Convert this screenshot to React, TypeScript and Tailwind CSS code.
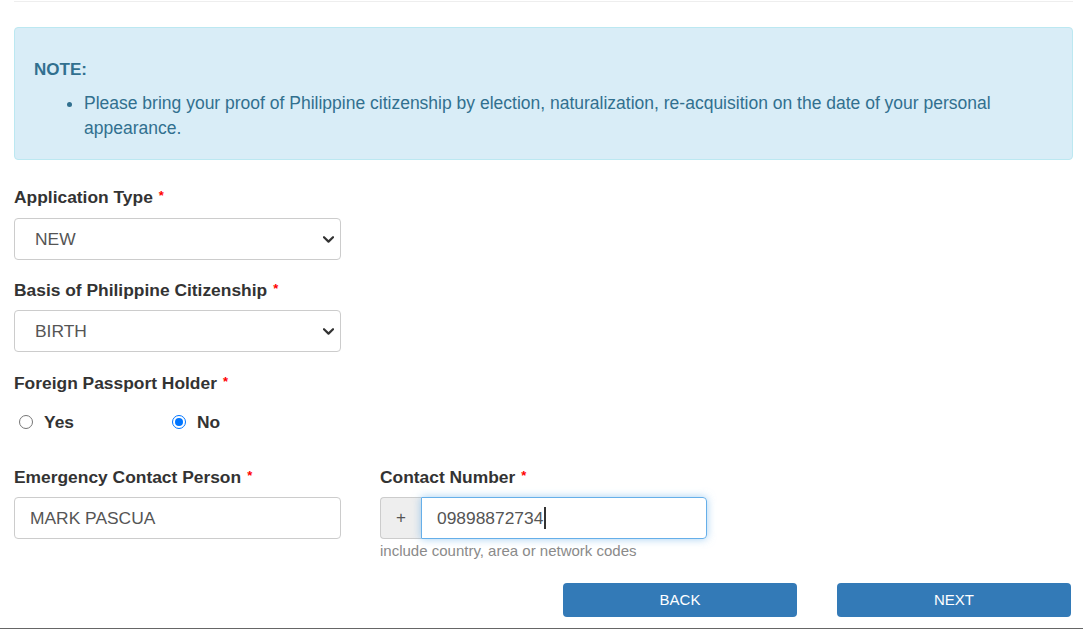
const Star = () => <span className="relative -top-[3px] ml-[6px] text-[13px] leading-none text-[#ff0000]">*</span>;

const Label = ({ children }: { children: React.ReactNode }) => (
  <div className="h-[25px] text-[17.4px] font-bold leading-[25px] text-[#333]">
    {children}
    <Star />
  </div>
);

const Chevron = () => (
  <svg width="11" height="7" viewBox="0 0 11 7" fill="none" className="text-[#333]">
    <polyline points="1,1.2 5.5,5.6 10,1.2" stroke="currentColor" strokeWidth="2.2" strokeLinecap="round" strokeLinejoin="round" />
  </svg>
);

const FakeSelect = ({ value }: { value: string }) => (
  <div className="mt-2 flex h-[42px] w-[327px] items-center justify-between rounded border border-[#ccc] bg-white pl-5 pr-[6px] text-[17.4px] text-[#555]">
    <span>{value}</span>
    <Chevron />
  </div>
);

const Radio = ({ label, checked }: { label: string; checked?: boolean }) => (
  <div className="flex items-center gap-[11px]">
    {checked ? (
      <span className="flex h-[14px] w-[14px] items-center justify-center rounded-full border-[1.5px] border-[#0075ff]">
        <span className="h-[8px] w-[8px] rounded-full bg-[#0075ff]" />
      </span>
    ) : (
      <span className="h-[14px] w-[14px] rounded-full border border-[#767676]" />
    )}
    <span className="text-[17.4px] font-bold text-[#333]">{label}</span>
  </div>
);

export default function App() {
  return (
    <div className="flex h-[629px] w-[1083px] flex-col bg-white pl-[14px] pr-[10px] font-['Liberation_Sans',Arial,sans-serif]">
      <div className="mt-[1px] h-px w-full bg-[#eee]" />

      {/* Note */}
      <div className="mt-[25px] rounded border border-[#bce8f1] bg-[#d9edf7] px-[19px] pb-[18px] pt-[29px] text-[#31708f]">
        <div className="text-[17px] font-bold leading-[25px]">NOTE:</div>
        <ul className="mt-[9px] list-disc pl-[50px] text-[17.5px] leading-[25px]">
          <li>
            Please bring your proof of Philippine citizenship by election, naturalization, re-acquisition on the date of your personal
            appearance.
          </li>
        </ul>
      </div>

      <div className="mt-[25px]">
        <Label>Application Type</Label>
        <FakeSelect value="NEW" />
      </div>

      <div className="mt-[18px]">
        <Label>Basis of Philippine Citizenship</Label>
        <div className="-mt-px">
          <FakeSelect value="BIRTH" />
        </div>
      </div>

      <div className="mt-[19px]">
        <Label>Foreign Passport Holder</Label>
        <div className="mt-[13px] flex pl-[5px]">
          <div className="w-[153px]">
            <Radio label="Yes" />
          </div>
          <Radio label="No" checked />
        </div>
      </div>

      <div className="mt-[30px] flex gap-[39px]">
        <div className="w-[327px]">
          <Label>Emergency Contact Person</Label>
          <div className="mt-[7px] flex h-[42px] items-center rounded border border-[#ccc] pl-[15px] text-[17.4px] text-[#555]">
            MARK PASCUA
          </div>
        </div>
        <div className="w-[327px]">
          <Label>Contact Number</Label>
          <div className="mt-[7px] flex h-[42px]">
            <div className="flex w-[41px] items-center justify-center rounded-l border border-r-0 border-[#ccc] bg-[#eee] text-[17px] text-[#555]">
              +
            </div>
            <div className="flex flex-1 items-center rounded-r border border-[#66afe9] pl-[15px] text-[17.4px] text-[#555] shadow-[0_0_8px_rgba(102,175,233,0.6)]">
              09898872734
              <span className="ml-px h-[22px] w-[1.5px] bg-[#333]" />
            </div>
          </div>
          <div className="mt-[1px] text-[15px] leading-[22px] text-[#8a8a8a]">include country, area or network codes</div>
        </div>
      </div>

      <div className="mt-[21px] flex justify-end gap-[40px] pr-[2px]">
        <button className="h-[34px] w-[234px] rounded bg-[#337ab7] text-[15px] text-white">BACK</button>
        <button className="h-[34px] w-[234px] rounded bg-[#337ab7] text-[15px] text-white">NEXT</button>
      </div>

      <div className="mt-auto -ml-[14px] -mr-[10px] h-px bg-[#666]" />
    </div>
  );
}
